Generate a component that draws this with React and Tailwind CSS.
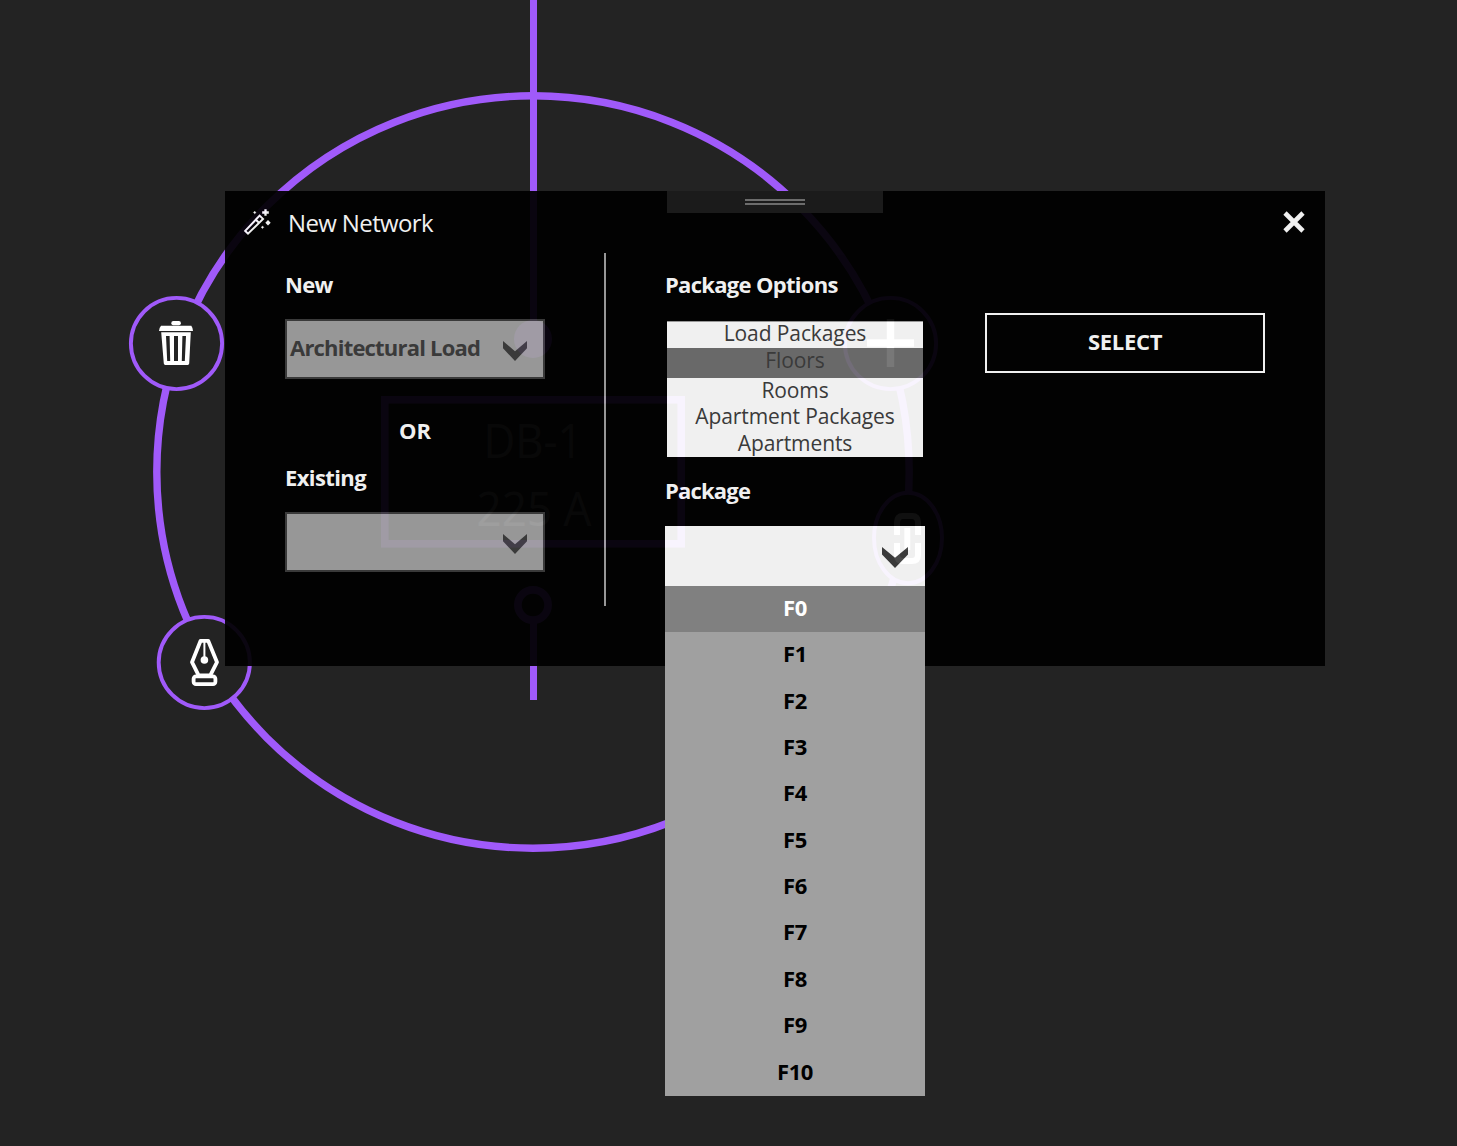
import React from "react";

const PURPLE = "#a05afa";
const CANVAS = "#232323";
const FLOORS = ["F0", "F1", "F2", "F3", "F4", "F5", "F6", "F7", "F8", "F9", "F10"];

function Diagram() {
  return (
    <svg className="absolute inset-0" width="1457" height="1146" viewBox="0 0 1457 1146" fill="none">
      <circle cx="533" cy="472" r="376.2" stroke={PURPLE} strokeWidth="7.4" />
      <path d="M533.5 0V339M533.5 620V700" stroke={PURPLE} strokeWidth="7" />
      <circle cx="533" cy="339" r="19" fill={PURPLE} />
      <circle cx="533" cy="605" r="15.1" stroke={PURPLE} strokeWidth="7.7" />
      <rect x="384.8" y="399.8" width="296.4" height="144" stroke={PURPLE} strokeWidth="7.6" />
      <g fill="#858585" fontFamily="'Open Sans', sans-serif" fontSize="47" textAnchor="middle">
        <text x="533" y="457.5" textLength="99" lengthAdjust="spacingAndGlyphs">DB-1</text>
        <text x="534" y="525.5" textLength="115" lengthAdjust="spacingAndGlyphs">225 A</text>
      </g>

      {/* delete node */}
      <circle cx="176.5" cy="343.5" r="45.6" fill={CANVAS} stroke={PURPLE} strokeWidth="3.9" />
      <g fill="#fff">
        <rect x="171.3" y="321" width="9.6" height="4.2" rx="2" />
        <path d="M161 325.7H191.3Q193 328 193 331H159Q159 328 161 325.7Z" />
        <path d="M161.2 332.2H190.8L189.2 363.6Q189.1 365 187.7 365H165.3Q163.9 365 163.8 363.6Z" />
      </g>
      <path d="M166 336H169.6L170.2 361H167.2ZM174 336H178V361H174ZM182.4 336H186L184.8 361H181.8Z" fill={CANVAS} />

      {/* pen node */}
      <circle cx="204.3" cy="662.5" r="45.6" fill={CANVAS} stroke={PURPLE} strokeWidth="3.9" />
      <g stroke="#fff" strokeWidth="3.8" strokeLinejoin="round">
        <path d="M200.6 640.8H208.2L217 662.2L210.3 675.4H198.6L192 662.2Z" />
        <rect x="193.6" y="676.4" width="21.8" height="7.8" rx="2.4" />
        <path d="M204.4 641V660" strokeWidth="2" />
      </g>
      <circle cx="204.4" cy="660" r="3.8" fill="#fff" />

      {/* add node */}
      <circle cx="890.5" cy="343.5" r="45.6" fill={CANVAS} stroke={PURPLE} strokeWidth="3.9" />
      <path d="M867 343H914M890.5 319V367" stroke="#fff" strokeWidth="7.4" />

      {/* link node */}
      <ellipse cx="908" cy="538" rx="34" ry="45.2" fill={CANVAS} stroke={PURPLE} strokeWidth="3.9" />
      <path
        d="M897 535V522.5Q897 516 903 516H912Q918 516 918 522.5V535M897 543V555Q897 561 903 561H912Q918 561 918 555V543M907.3 528V550"
        stroke="#fff"
        strokeWidth="6"
      />
    </svg>
  );
}

function Wand() {
  return (
    <svg width="28" height="28" viewBox="243 208 28 28" fill="none">
      <path d="M245.2 230.9L259.6 215.6L263 218.9L248 233.7ZM255.8 219.7L259 222.8" stroke="#fff" strokeWidth="2" />
      <path d="M265.5 209.2V215.8M262.2 212.5H268.8" stroke="#fff" strokeWidth="2.3" />
      <path d="M268 220L270.7 222.7L268 225.4L265.3 222.7Z" fill="#fff" />
      <path d="M254.7 211.2L256 212.5L254.7 213.8L253.4 212.5ZM262.5 226L263.8 227.3L262.5 228.6L261.2 227.3Z" fill="#fff" stroke="#fff" strokeWidth=".4" />
    </svg>
  );
}

function Chevron({ className }) {
  return (
    <svg className={className} viewBox="0 0 24 20" preserveAspectRatio="none">
      <path d="M0 0L12 10.2L24 0V7.2L12 20L0 7.2Z" fill="#3c3c3c" />
    </svg>
  );
}

function Label({ children, className = "" }) {
  return <div className={"flex items-center whitespace-nowrap text-[22px] font-bold text-white " + className}>{children}</div>;
}

function SelectBox({ children }) {
  return (
    <div className="flex h-[59.5px] w-[260px] items-center justify-between border-2 border-[#3c3c3c] bg-[#a0a0a0] pr-4 pl-[3px] text-[22px] font-bold text-[#3c3c3c]">
      <span className="whitespace-nowrap pb-[2px] tracking-[-0.8px]">{children}</span>
      <Chevron className="mt-1 h-5 w-6 shrink-0" />
    </div>
  );
}

function Dialog() {
  return (
    <div className="absolute top-[191px] left-[225px] h-[475px] w-[1100px] bg-black text-white opacity-[0.934]">
      <header className="flex h-[62px] items-center pl-[18px] pr-5">
        <Wand />
        <h1 className="ml-[17px] grow pt-[1px] text-[24px] font-normal tracking-[-0.63px]">New Network</h1>
        <svg width="22" height="22" viewBox="0 0 22 22">
          <path d="M2 2L20 20M20 2L2 20" stroke="#fff" strokeWidth="4.6" />
        </svg>
      </header>

      <div className="flex h-[353px] pl-[60px]">
        <section className="w-[260px]">
          <Label className="h-[66px] pb-[3px] tracking-[-0.7px]">New</Label>
          <SelectBox>Architectural Load</SelectBox>
          <Label className="mt-[29.5px] h-[47px] justify-center pb-[2px]">OR</Label>
          <Label className="mb-[10px] h-[47px] pb-[2px] tracking-[-0.6px]">Existing</Label>
          <SelectBox />
        </section>
        <div className="mr-[59px] ml-[59px] w-[2px] bg-[#a0a0a0]" />
        <section className="w-[260px]">
          <Label className="h-[66px] pb-[3px] tracking-[-0.7px]">Package Options</Label>
          <ul className="mx-[2px] mt-[2px] border-t border-[#a0a0a0] bg-white text-center text-[21px] leading-[24px] tracking-[-0.1px] text-[#3c3c3c]">
            <li className="h-[26px] leading-[23px]">Load Packages</li>
            <li className="h-[30px] bg-[#6f6f6f] leading-[24px]">Floors</li>
            <li className="h-[26px]">Rooms</li>
            <li className="h-[27px]">Apartment Packages</li>
            <li className="h-[26px]">Apartments</li>
          </ul>
          <Label className="h-[69px] pb-[2px] tracking-[-0.8px]">Package</Label>
          <div className="flex h-[60px] items-center justify-end bg-white pr-[17px]">
            <Chevron className="mt-[2px] h-[21px] w-[26px]" />
          </div>
        </section>
        <section className="ml-[60px] w-[280px] pt-[60px]">
          <button className="flex h-[60px] w-full items-center justify-center border-2 border-white pb-[3px] text-[22px] font-bold tracking-[-0.3px]">SELECT</button>
        </section>
      </div>
    </div>
  );
}

export default function App() {
  return (
    <main className="relative h-[1146px] w-[1457px] overflow-hidden bg-[#232323] font-['Open_Sans',sans-serif]">
      <Diagram />
      <Dialog />

      {/* drag handle on the dialog's top edge */}
      <div className="absolute top-[191px] left-[667px] flex h-[22px] w-[216px] flex-col items-center gap-[2px] bg-[#1b1b1b] pt-2">
        <div className="h-[2px] w-[60px] bg-[#6c6c6c]" />
        <div className="h-[2px] w-[60px] bg-[#6c6c6c]" />
      </div>

      <ul className="absolute top-[586px] left-[665px] flex h-[510px] w-[260px] flex-col bg-[#a0a0a0] text-[22px] font-bold tracking-[-0.4px] text-black">
        {FLOORS.map((f, i) => (
          <li key={f} className={"flex flex-1 items-center justify-center pb-[3.5px] " + (i === 0 ? "bg-[#808080] text-white" : "")}>
            {f}
          </li>
        ))}
      </ul>
    </main>
  );
}
